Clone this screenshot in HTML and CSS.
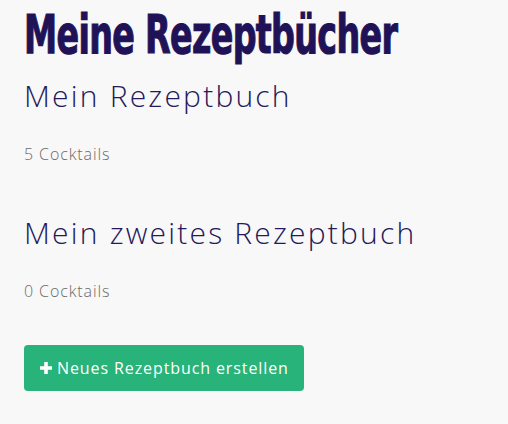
FILE: index.html
```html
<!DOCTYPE html>
<html lang="de">
<head>
<meta charset="utf-8">
<link rel="stylesheet" href="styles.css">
</head>
<body>
<main class="container">
  <h1 class="page-title"><span class="page-title-text">Meine Rezeptbücher</span></h1>
  <section class="book">
    <h2 class="book-title">Mein Rezeptbuch</h2>
    <p class="book-count">5 Cocktails</p>
  </section>
  <section class="book">
    <h2 class="book-title">Mein zweites Rezeptbuch</h2>
    <p class="book-count">0 Cocktails</p>
  </section>
  <button class="btn-create" type="button"><svg class="plus" viewBox="0 0 12 12" width="12" height="12"><path d="M4.2 0h3.6v4.2H12v3.6H7.8V12H4.2V7.8H0V4.2h4.2z" fill="#fff"/></svg>Neues Rezeptbuch erstellen</button>
</main>
</body>
</html>
```
FILE: styles.css
```css
html, body {
  margin: 0;
  padding: 0;
  background: #f8f8f8;
}
.container {
  padding: 0 24px;
  font-family: "Open Sans", "Lato", sans-serif;
}
.page-title {
  margin: 11px 0 0;
  font-family: "DejaVu Sans Condensed", "DejaVu Sans", sans-serif;
  font-weight: bold;
  font-size: 37px;
  line-height: 60px;
  color: #1f1256;
  white-space: nowrap;
}
.page-title-text {
  display: inline-block;
  line-height: 37px;
  letter-spacing: -0.65px;
  -webkit-text-stroke: 0.8px #1f1256;
  transform: scaleY(1.46);
  transform-origin: 0 31px;
}
.book-title {
  margin: 7px 0 0;
  font-weight: 300;
  font-size: 30px;
  line-height: 36px;
  letter-spacing: 2.2px;
  color: #24195a;
}
.book + .book .book-title {
  margin-top: 51px;
}
.book-count {
  margin: 30px 0 0;
  font-weight: 300;
  font-size: 16px;
  line-height: 20px;
  letter-spacing: 0.9px;
  color: #6a6a6a;
}
.btn-create {
  display: flex;
  align-items: center;
  gap: 5px;
  height: 46px;
  margin-top: 44px;
  padding: 0 15px 0 16px;
  border: none;
  border-radius: 4px;
  background: #27b379;
  color: #fff;
  font-family: "Open Sans", "Lato", sans-serif;
  font-size: 16px;
  font-weight: 400;
  letter-spacing: 0.9px;
}
.plus {
  display: block;
}
```
